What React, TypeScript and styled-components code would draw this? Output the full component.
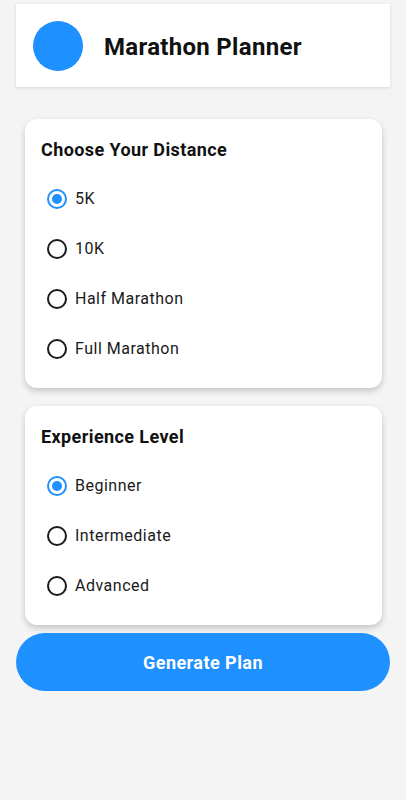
import React, { useState } from 'react';
import styled, { createGlobalStyle } from 'styled-components';

const GlobalStyle = createGlobalStyle`
  html, body {
    margin: 0;
    padding: 0;
    background-color: #f4f4f4;
    font-family: Roboto, "Noto Sans", Arial, sans-serif;
    color: #111;
  }
`;

const Page = styled.div`
  min-height: 800px;
  padding: 4px 16px 0 16px;
  box-sizing: border-box;
`;

const HeaderBar = styled.header`
  display: flex;
  align-items: center;
  height: 83px;
  padding: 0 17px;
  background-color: #fff;
  box-shadow: 0 1px 3px rgba(0, 0, 0, 0.12);
  margin-bottom: 32px;
`;

const Avatar = styled.div`
  width: 50px;
  height: 50px;
  border-radius: 50%;
  background-color: #1e90ff;
  flex-shrink: 0;
`;

const Title = styled.h1`
  margin: 2px 0 0 21px;
  font-size: 24px;
  font-weight: 700;
  line-height: 30px;
  letter-spacing: 0.3px;
`;

const Card = styled.section`
  margin: 0 8px 18px 9px;
  padding: 19px 16px 14px 16px;
  background-color: #fff;
  border-radius: 12px;
  box-shadow: 0 3px 6px rgba(0, 0, 0, 0.2);
`;

const CardTitle = styled.h2`
  margin: 0 0 12px 0;
  font-size: 18px;
  font-weight: 700;
  line-height: 24px;
  letter-spacing: 0.4px;
`;

const OptionRow = styled.label`
  display: flex;
  align-items: center;
  height: 50px;
  padding-left: 6px;
  cursor: pointer;
`;

const Ring = styled.span<{ $checked: boolean }>`
  width: 20px;
  height: 20px;
  box-sizing: border-box;
  border-radius: 50%;
  border: 2px solid ${(p) => (p.$checked ? '#1e90ff' : '#1a1a1a')};
  display: flex;
  align-items: center;
  justify-content: center;
  margin-right: 8px;

  &::after {
    content: '';
    width: 10px;
    height: 10px;
    border-radius: 50%;
    background-color: #1e90ff;
    display: ${(p) => (p.$checked ? 'block' : 'none')};
  }
`;

const OptionText = styled.span`
  font-size: 16px;
  line-height: 20px;
  letter-spacing: 0.5px;
  color: #1a1a1a;
`;

const GenerateButton = styled.button`
  display: block;
  width: 100%;
  height: 58px;
  margin-top: -10px;
  border: none;
  border-radius: 29px;
  background-color: #1e90ff;
  color: #fff;
  font-family: Roboto, "Noto Sans", Arial, sans-serif;
  font-size: 18px;
  font-weight: 700;
  letter-spacing: 0.45px;
  cursor: pointer;
`;

interface RadioGroupProps {
  title: string;
  options: string[];
  value: string;
  onChange: (v: string) => void;
}

const RadioGroup: React.FC<RadioGroupProps> = ({ title, options, value, onChange }) => (
  <Card>
    <CardTitle>{title}</CardTitle>
    {options.map((opt) => (
      <OptionRow key={opt} onClick={() => onChange(opt)}>
        <Ring $checked={value === opt} />
        <OptionText>{opt}</OptionText>
      </OptionRow>
    ))}
  </Card>
);

const App: React.FC = () => {
  const [distance, setDistance] = useState('5K');
  const [level, setLevel] = useState('Beginner');

  return (
    <>
      <GlobalStyle />
      <Page>
        <HeaderBar>
          <Avatar />
          <Title>Marathon Planner</Title>
        </HeaderBar>
        <RadioGroup
          title="Choose Your Distance"
          options={['5K', '10K', 'Half Marathon', 'Full Marathon']}
          value={distance}
          onChange={setDistance}
        />
        <RadioGroup
          title="Experience Level"
          options={['Beginner', 'Intermediate', 'Advanced']}
          value={level}
          onChange={setLevel}
        />
        <GenerateButton>Generate Plan</GenerateButton>
      </Page>
    </>
  );
};

export default App;
